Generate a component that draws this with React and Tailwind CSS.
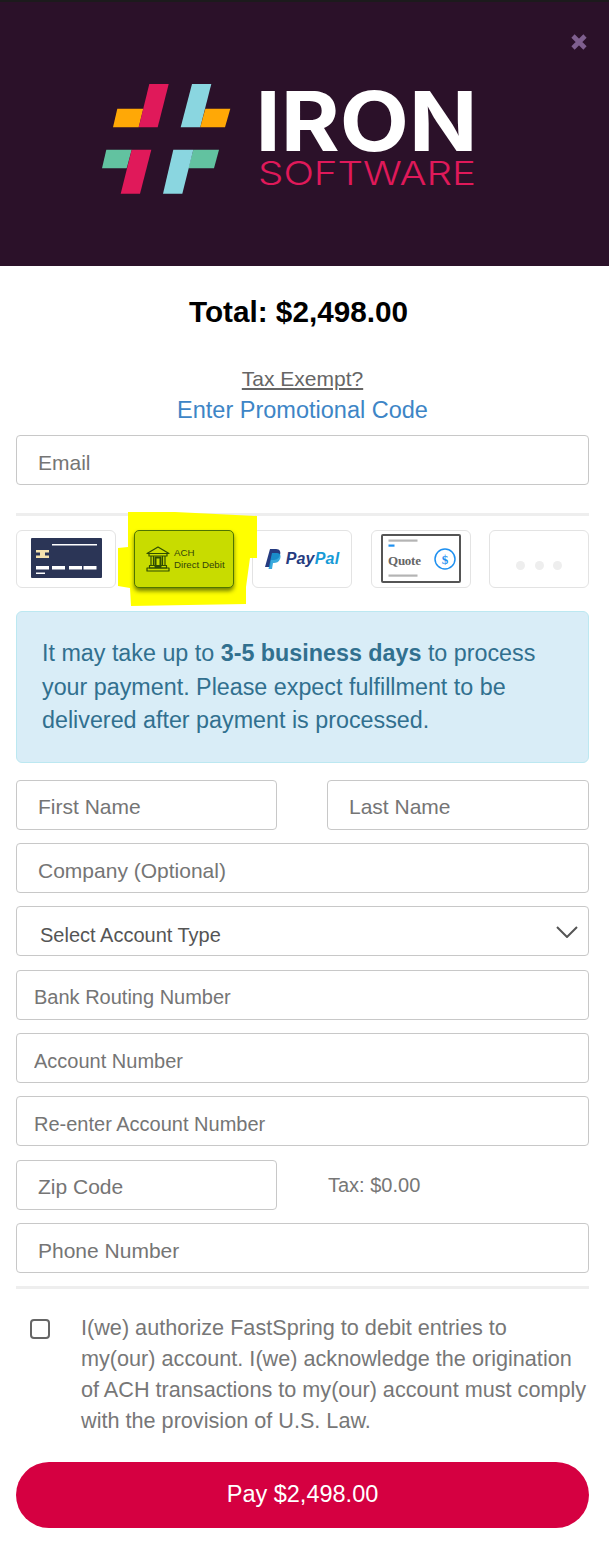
import React from "react";

const sans = "font-['Liberation_Sans',Arial,sans-serif]";

function Logo() {
  return (
    <svg width="400" height="130" viewBox="100 75 400 130" className="block">
      <polygon points="117.3,108.7 143.3,108.7 138.7,127.3 113,127.3" fill="#ffa806" />
      <polygon points="149.3,84 168.7,84 157.7,127.3 138.7,127.3" fill="#e0195a" />
      <polygon points="192,84 211.3,84 200.3,127.3 180.7,127.3" fill="#8ad6e0" />
      <polygon points="205.3,108.7 230.3,108.7 225,127.3 200.3,127.3" fill="#ffa806" />
      <polygon points="106.3,149.7 131.7,149.7 126.7,168.3 102,168.3" fill="#62c2a0" />
      <polygon points="131.7,149.7 151.3,149.7 140,193.7 120.7,193.7" fill="#e0195a" />
      <polygon points="193.3,149.7 219,149.7 214,168.3 188.3,168.3" fill="#62c2a0" />
      <polygon points="173.3,149.7 193.3,149.7 182.3,193.7 163,193.7" fill="#8ad6e0" />
      <text x="255.5" y="150.7" fontFamily="Inter, sans-serif" fontWeight="700" fontSize="82" fill="#fff" textLength="222" lengthAdjust="spacingAndGlyphs">IRON</text>
      <text x="258" y="185.3" fontFamily="Inter, sans-serif" fontWeight="300" fontSize="32.5" fill="#e0195a" textLength="218" lengthAdjust="spacingAndGlyphs">SOFTWARE</text>
    </svg>
  );
}

function Field({ placeholder, className = "", size = "text-[21px]", pad = "pl-[21px]", top = "pt-[5px]" }) {
  return (
    <input
      placeholder={placeholder}
      className={`block h-[50px] w-full rounded border border-[#c8c8c8] bg-white ${pad} pr-3 ${top} ${size} text-[#555] outline-none placeholder:text-[#757575] ${className}`}
    />
  );
}

function Tile({ children, className = "" }) {
  return (
    <div className={`flex h-[58px] w-[100px] shrink-0 items-center justify-center rounded-md border border-[#e3e3e3] bg-white ${className}`}>
      {children}
    </div>
  );
}

function CardIcon() {
  return (
    <svg width="71" height="40" viewBox="0 0 71 40" className="-mt-[2px]">
      <rect width="71" height="40" rx="1" fill="#2b3556" />
      <rect x="21" y="6" width="45" height="1.5" fill="#fff" />
      <rect x="5" y="12" width="13" height="2.5" fill="#f6e2ae" />
      <rect x="5" y="17.5" width="13" height="2.5" fill="#f6e2ae" />
      <rect x="9" y="13" width="5" height="6" fill="#f6e2ae" />
      <rect x="5" y="28" width="13" height="3.5" fill="#fff" />
      <rect x="21" y="28" width="13" height="3.5" fill="#fff" />
      <rect x="38" y="28" width="13" height="3.5" fill="#fff" />
      <rect x="52.5" y="28" width="13" height="3.5" fill="#fff" />
      <rect x="5" y="34.5" width="9" height="1.5" fill="#fff" />
    </svg>
  );
}

function BankIcon() {
  return (
    <svg width="24" height="26" viewBox="0 0 24 26" fill="none" stroke="#2f4d00" strokeWidth="1.2" strokeLinejoin="round">
      <path d="M12 1 L23 7.5 H1 Z" />
      <path d="M3 7.5 V10 H21 V7.5" />
      <path d="M5 10 V19 M7.5 10 V19 M16.5 10 V19 M19 10 V19" />
      <rect x="9.5" y="11.5" width="5" height="9.5" strokeWidth="2" />
      <path d="M3.5 19.5 H20.5 V22 H3.5 Z" />
      <path d="M1 22 H23 V25 H1 Z" />
    </svg>
  );
}

function PayPalMark() {
  return (
    <svg width="16" height="20" viewBox="0 0 16 20">
      <path d="M5 0 H11 C15 0 16 3 15 6 C14 10 11 11 8 11 H6 L5 18 H0 Z" fill="#253b80" />
      <path d="M7 4 H12 C16 4 16 8 15 10 C14 13 11 14 9 14 H8 L7 20 H3.5 Z" fill="#179bd7" opacity="0.85" />
    </svg>
  );
}

function QuoteIcon() {
  return (
    <svg width="80" height="49" viewBox="0 0 80 49" className="-mt-[1px]">
      <rect x="1" y="1" width="78" height="47" rx="1" fill="#fff" stroke="#555" strokeWidth="2" />
      <rect x="7.5" y="5.5" width="29" height="2.2" fill="#b4b4b4" />
      <rect x="7.5" y="10.5" width="6" height="2.2" fill="#1e90f0" />
      <rect x="7.5" y="40.5" width="29" height="2.2" fill="#b4b4b4" />
      <text x="7" y="31" fontFamily="'Liberation Serif', serif" fontWeight="700" fontSize="13" fill="#666" textLength="33">Quote</text>
      <circle cx="64" cy="25" r="10" fill="none" stroke="#1e90f0" strokeWidth="1.5" />
      <text x="64" y="30" textAnchor="middle" fontFamily="'Liberation Serif', serif" fontWeight="700" fontSize="13" fill="#1e90f0">$</text>
    </svg>
  );
}

export default function App() {
  return (
    <div className={`${sans} relative h-[1549px] w-[609px] overflow-hidden bg-white`}>
      <header className="relative flex h-[266px] items-start border-t-2 border-[#1c1a1c] bg-[#2b1129] pl-[100px] pt-[73px]">
        <Logo />
        <svg width="18" height="18" viewBox="0 0 18 18" className="absolute left-[570px] top-[31px]">
          <path d="M3 3 L15 15 M15 3 L3 15" stroke="#7f5f8f" strokeWidth="4.6" />
        </svg>
      </header>

      <main className="relative pl-4 pr-5 pt-[28px]">
        <h1 className="h-[36px] pr-[8px] text-center text-[29.7px] font-bold leading-[36px] text-black">Total: $2,498.00</h1>
        <p className="mt-[36px] text-center text-[21px] leading-[26px] text-[#666] underline">Tax Exempt?</p>
        <p className="mt-[3px] text-center text-[23.5px] leading-[30px] text-[#3d85c6]">Enter Promotional Code</p>
        <Field placeholder="Email" className="mt-[10px]" />
        <div className="mt-[28px] h-[3px] bg-[#eeeeee]" />

        <svg width="140" height="95" viewBox="118 512 140 95" className="absolute left-[118px] top-[246px] z-[5]">
          <polygon points="128,512 175,512 257,516 257,558 250,558 246,587 246,604 131,606 130,588 118,586 118,548 128,547" fill="#ffff00" />
        </svg>

        <div className="relative mt-[14px] flex">
          <Tile><CardIcon /></Tile>
          <div className="relative z-10 ml-[18px] flex h-[58px] w-[100px] shrink-0 items-center gap-[4px] rounded-[5px] border border-[#4f7500] bg-[#c8dc00] pl-[11px] shadow-[0_3px_4px_rgba(40,60,0,0.65)]">
            <BankIcon />
            <div className="text-[9.7px] leading-[12.5px] text-[#33450a]">
              <div>ACH</div>
              <div className="whitespace-nowrap">Direct Debit</div>
            </div>
          </div>
          <Tile className="ml-[18px] gap-[5px]">
            <PayPalMark />
            <span className="text-[16px] font-bold italic tracking-[0.2px] text-[#253b80]">
              Pay<span className="text-[#179bd7]">Pal</span>
            </span>
          </Tile>
          <Tile className="ml-[19px]"><QuoteIcon /></Tile>
          <Tile className="ml-[18px]">
            <div className="mt-[12px] flex gap-[9.5px]">
              <span className="h-[9px] w-[9px] rounded-full bg-[#eeeeee]" />
              <span className="h-[9px] w-[9px] rounded-full bg-[#eeeeee]" />
              <span className="h-[9px] w-[9px] rounded-full bg-[#eeeeee]" />
            </div>
          </Tile>
        </div>

        <div className="relative mt-[23px] h-[152px] rounded-md border border-[#bce8f1] bg-[#d9edf7] px-[25px] pt-[25px] text-[23.3px] leading-[33.5px] text-[#31708f]">
          It may take up to <b>3-5 business days</b> to process your payment. Please expect fulfillment to be delivered after payment is processed.
        </div>

        <div className="mt-[17px] flex justify-between">
          <Field placeholder="First Name" top="pt-[3px]" className="!w-[261px]" />
          <Field placeholder="Last Name" top="pt-[3px]" className="!w-[262px]" />
        </div>
        <Field placeholder="Company (Optional)" className="mt-[13px]" />
        <div className="relative mt-[13px]">
          <select className="block h-[50px] w-full appearance-none rounded border border-[#c8c8c8] bg-white pl-[23px] pt-[8px] text-[20px] text-[#555] outline-none">
            <option>Select Account Type</option>
          </select>
          <svg width="22" height="12" viewBox="0 0 22 12" fill="none" className="absolute left-[540px] top-[20px]">
            <path d="M1 1 L11 11 L21 1" stroke="#555" strokeWidth="2" />
          </svg>
        </div>
        <Field placeholder="Bank Routing Number" size="text-[20px]" pad="pl-[17px]" className="mt-[14px]" />
        <Field placeholder="Account Number" size="text-[20px]" pad="pl-[17px]" top="pt-[7px]" className="mt-[13px]" />
        <Field placeholder="Re-enter Account Number" size="text-[20px]" pad="pl-[17px]" top="pt-[7px]" className="mt-[13px]" />
        <div className="mt-[14px] flex items-center">
          <Field placeholder="Zip Code" top="pt-[3px]" className="!w-[261px]" />
          <span className="ml-[51px] text-[20px] text-[#777]">Tax: $0.00</span>
        </div>
        <Field placeholder="Phone Number" className="mt-[13px]" />
        <div className="mt-[13px] h-[3px] bg-[#eeeeee]" />

        <div className="mt-[22px] flex">
          <input type="checkbox" className="ml-[14px] mt-[8px] h-[20px] w-[20px] shrink-0 appearance-none rounded-[4px] border-2 border-[#666] bg-white" />
          <p className="ml-[31px] mt-[1px] h-[124px] shrink-0 whitespace-nowrap text-[21.65px] leading-[31px] text-[#777]">
            I(we) authorize FastSpring to debit entries to<br />
            my(our) account. I(we) acknowledge the origination<br />
            of ACH transactions to my(our) account must comply<br />
            with the provision of U.S. Law.
          </p>
        </div>
        <button className="mt-[26px] block h-[66px] w-full rounded-full bg-[#d50041] text-[23.5px] text-white">Pay $2,498.00</button>
      </main>
    </div>
  );
}
